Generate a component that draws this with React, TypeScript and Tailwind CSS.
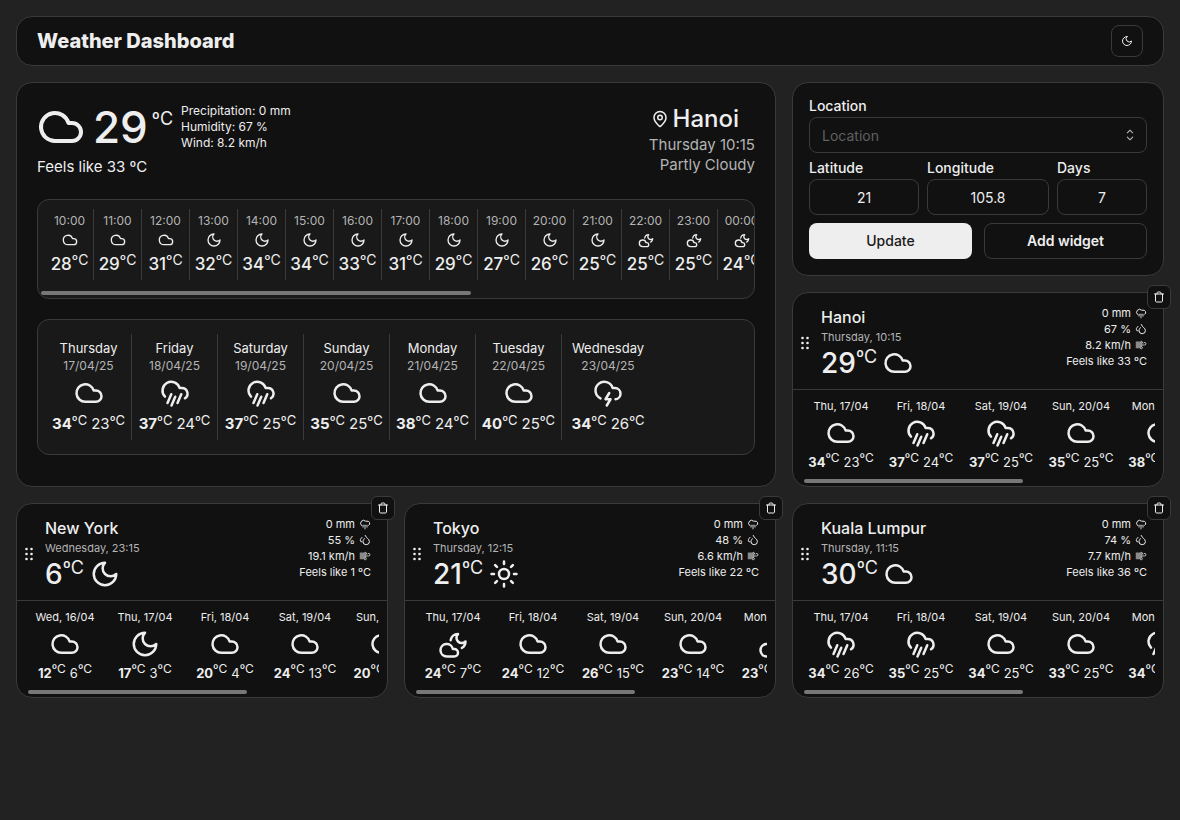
import React, { useState } from "react";
import { RxCaretSort } from "react-icons/rx";

type IconName = "cloud" | "moon" | "cloudMoon" | "rain" | "storm" | "sun" | "trash";

const paths: Record<IconName, React.ReactNode> = {
  cloud: <path d="M17.5 19H9a7 7 0 1 1 6.71-9h1.79a4.5 4.5 0 1 1 0 9Z" />,
  moon: <path d="M12 3a6 6 0 0 0 9 9 9 9 0 1 1-9-9Z" />,
  cloudMoon: (
    <>
      <path d="M13 16a3 3 0 1 1 0 6H7a5 5 0 1 1 4.9-6Z" />
      <path d="M10.1 9A6 6 0 0 1 16 4a4.24 4.24 0 0 0 6 6 6 6 0 0 1-3 5.197" />
    </>
  ),
  rain: (
    <>
      <path d="M4 14.899A7 7 0 1 1 15.71 8h1.79a4.5 4.5 0 0 1 2.5 8.242" />
      <path d="m9.2 22 3-7" />
      <path d="m9 13-3 7" />
      <path d="m17 13-3 7" />
    </>
  ),
  storm: (
    <>
      <path d="M6 16.326A7 7 0 1 1 15.71 8h1.79a4.5 4.5 0 0 1 .5 8.973" />
      <path d="m13 12-3 5h4l-3 5" />
    </>
  ),
  sun: (
    <>
      <circle cx="12" cy="12" r="4" />
      <path d="M12 2v2M12 20v2M4.93 4.93l1.41 1.41M17.66 17.66l1.41 1.41M2 12h2M20 12h2M6.34 17.66l-1.41 1.41M19.07 4.93l-1.41 1.41" />
    </>
  ),
  trash: (
    <>
      <path d="M3 6h18" />
      <path d="M19 6v14c0 1-1 2-2 2H7c-1 0-2-1-2-2V6" />
      <path d="M8 6V4c0-1 1-2 2-2h4c1 0 2 1 2 2v2" />
    </>
  ),
};

function Icon({ name, className }: { name: IconName; className: string }) {
  return (
    <svg
      viewBox="0 0 24 24"
      fill="none"
      stroke="currentColor"
      strokeWidth="2"
      strokeLinecap="round"
      strokeLinejoin="round"
      aria-hidden="true"
      className={`shrink-0 ${className}`}
    >
      {paths[name]}
    </svg>
  );
}

function MetricIcon({ name }: { name: "rain" | "drops" | "wind" }) {
  return (
    <svg viewBox="0 0 12 12" fill="none" stroke="currentColor" strokeLinecap="round" strokeLinejoin="round" aria-hidden="true" className="size-3 shrink-0">
      {name === "rain" && (
        <>
          <path d="M2.5 7.5A2.8 2.8 0 1 1 6.6 3.2h1.4a2.3 2.3 0 0 1 1.8 4.1" strokeWidth="1" />
          <path d="M4 7.5v1.5M6 7.5v3.2M8 7.5v1.5M4 7.5h4" strokeWidth="1.6" opacity="0.55" />
        </>
      )}
      {name === "drops" && (
        <>
          <path d="M3 3.4C2 4.5 1.3 5.3 1.3 6.2A1.7 1.7 0 0 0 3 8" strokeWidth="1" />
          <path d="M6.2 1.5C6.8 3.9 10.4 4.8 10.4 7.5a3.2 3.2 0 0 1-6.4 0C4 6.5 4.7 5.7 5.3 4.7" strokeWidth="1" />
        </>
      )}
      {name === "wind" && (
        <>
          <path d="M1.5 3.3h4.5M1.5 5h5M1.5 6.700h5M1.5 8.3h4" strokeWidth="1.8" opacity="0.55" />
          <path d="M6 2.5a1 1 0 1 1 .8 1.8M7 6h2.6a1.3 1.3 0 1 0-1.1-1.9M6 7.5a1.2 1.2 0 1 1-.6 2" strokeWidth="1" opacity="0.75" />
        </>
      )}
    </svg>
  );
}

const hours: [string, IconName, number][] = [
  ["10:00", "cloud", 28],
  ["11:00", "cloud", 29],
  ["12:00", "cloud", 31],
  ["13:00", "moon", 32],
  ["14:00", "moon", 34],
  ["15:00", "moon", 34],
  ["16:00", "moon", 33],
  ["17:00", "moon", 31],
  ["18:00", "moon", 29],
  ["19:00", "moon", 27],
  ["20:00", "moon", 26],
  ["21:00", "moon", 25],
  ["22:00", "cloudMoon", 25],
  ["23:00", "cloudMoon", 25],
  ["00:00", "cloudMoon", 24],
];

const week: [string, string, IconName, number, number][] = [
  ["Thursday", "17/04/25", "cloud", 34, 23],
  ["Friday", "18/04/25", "rain", 37, 24],
  ["Saturday", "19/04/25", "rain", 37, 25],
  ["Sunday", "20/04/25", "cloud", 35, 25],
  ["Monday", "21/04/25", "cloud", 38, 24],
  ["Tuesday", "22/04/25", "cloud", 40, 25],
  ["Wednesday", "23/04/25", "storm", 34, 26],
];

type Widget = {
  city: string;
  time: string;
  temp: number;
  icon: IconName;
  humidity: number;
  wind: number;
  feels: number;
  days: [string, IconName, number, number][];
};

const widgets: Widget[] = [
  {
    city: "Hanoi", time: "Thursday, 10:15", temp: 29, icon: "cloud", humidity: 67, wind: 8.2, feels: 33,
    days: [
      ["Thu, 17/04", "cloud", 34, 23],
      ["Fri, 18/04", "rain", 37, 24],
      ["Sat, 19/04", "rain", 37, 25],
      ["Sun, 20/04", "cloud", 35, 25],
      ["Mon, 21/04", "cloud", 38, 24],
    ],
  },
  {
    city: "New York", time: "Wednesday, 23:15", temp: 6, icon: "moon", humidity: 55, wind: 19.1, feels: 1,
    days: [
      ["Wed, 16/04", "cloud", 12, 6],
      ["Thu, 17/04", "moon", 17, 3],
      ["Fri, 18/04", "cloud", 20, 4],
      ["Sat, 19/04", "cloud", 24, 13],
      ["Sun, 20/04", "cloud", 20, 10],
    ],
  },
  {
    city: "Tokyo", time: "Thursday, 12:15", temp: 21, icon: "sun", humidity: 48, wind: 6.6, feels: 22,
    days: [
      ["Thu, 17/04", "cloudMoon", 24, 7],
      ["Fri, 18/04", "cloud", 24, 12],
      ["Sat, 19/04", "cloud", 26, 15],
      ["Sun, 20/04", "cloud", 23, 14],
      ["Mon, 21/04", "cloudMoon", 23, 14],
    ],
  },
  {
    city: "Kuala Lumpur", time: "Thursday, 11:15", temp: 30, icon: "cloud", humidity: 74, wind: 7.7, feels: 36,
    days: [
      ["Thu, 17/04", "rain", 34, 26],
      ["Fri, 18/04", "rain", 35, 25],
      ["Sat, 19/04", "cloud", 34, 25],
      ["Sun, 20/04", "cloud", 33, 25],
      ["Mon, 21/04", "rain", 34, 25],
    ],
  },
];

function HighLow({ high, low, className, unit }: { high: number; low: number; className: string; unit: string }) {
  return (
    <p className={`flex items-start whitespace-nowrap ${className}`}>
      <strong className="font-bold">{high}</strong>
      <span className={unit}>ºC</span>
      <span className="ml-1">{low}</span>
      <span className={unit}>ºC</span>
    </p>
  );
}

function Dots() {
  return (
    <svg viewBox="0 0 8 14" fill="currentColor" aria-hidden="true" className="h-3.5 w-2">
      {[2, 7, 12].map((y) => (
        <React.Fragment key={y}>
          <circle cx="1.5" cy={y} r="1.3" />
          <circle cx="6.5" cy={y} r="1.3" />
        </React.Fragment>
      ))}
    </svg>
  );
}

function WidgetCard({ w }: { w: Widget }) {
  return (
    <article className="relative flex flex-col rounded-2xl border border-[#3a3a3a] bg-[#111]">
      <button
        type="button"
        aria-label={`Delete ${w.city}`}
        className="absolute -top-2 -right-2 flex size-6 items-center justify-center rounded-md border border-[#3a3a3a] bg-[#111]"
      >
        <Icon name="trash" className="size-3" />
      </button>
      <div className="flex h-[97px] items-center border-b border-[#3a3a3a] pt-1 pr-4 pl-2">
        <button type="button" aria-label={`Move ${w.city}`} className="mr-3 flex">
          <Dots />
        </button>
        <div className="flex-1">
          <h2 className="text-base leading-5 font-medium">{w.city}</h2>
          <p className="text-[11px] leading-5 text-[#b4b4b4]">{w.time}</p>
          <div className="flex items-center gap-1.5">
            <p className="flex items-start text-[28px] leading-8 font-medium">
              {w.temp}
              <span className="text-lg leading-5 font-normal">ºC</span>
            </p>
            <Icon name={w.icon} className="size-[30px]" />
          </div>
        </div>
        <ul className="mb-3 text-right text-[11px] leading-4">
          <li className="flex items-center justify-end gap-1">0 mm <MetricIcon name="rain" /></li>
          <li className="flex items-center justify-end gap-1">{w.humidity} % <MetricIcon name="drops" /></li>
          <li className="flex items-center justify-end gap-1">{w.wind} km/h <MetricIcon name="wind" /></li>
          <li>Feels like {w.feels} ºC</li>
        </ul>
      </div>
      <div className="px-2 pt-2">
        <div className="overflow-x-auto [scrollbar-width:none]">
          <ul className="flex w-max">
            {w.days.map(([day, icon, high, low]) => (
              <li key={day} className="flex w-20 flex-col items-center">
                <p className="text-[11px] leading-4 whitespace-nowrap">{day}</p>
                <Icon name={icon} className="my-1 size-[30px]" />
                <HighLow high={high} low={low} className="text-[13px] leading-5" unit="text-xs leading-3" />
              </li>
            ))}
          </ul>
        </div>
        <div className="mx-[3px] mt-[7px] mb-[3px] h-1 w-[62%] rounded-full bg-[#777]" />
      </div>
    </article>
  );
}

const field =
  "h-9 w-full min-w-0 rounded-lg border border-[#3a3a3a] bg-[#111] text-sm outline-none placeholder:text-[#606060]";

const labelText = "mb-1 block text-sm leading-[14px] font-medium";

function Field({ id, label, value }: { id: string; label: string; value: string }) {
  const [text, setText] = useState(value);
  return (
    <div className="min-w-0">
      <label htmlFor={id} className={labelText}>{label}</label>
      <input id={id} value={text} onChange={(e) => setText(e.target.value)} className={`${field} px-3 text-center`} />
    </div>
  );
}

export default function App() {
  return (
    <div className="min-h-screen bg-[#222] p-4 font-['Inter','Liberation_Sans',sans-serif] text-[#eee]">
      <header className="flex items-center justify-between rounded-2xl border border-[#3a3a3a] bg-[#111] px-5 py-2">
        <h1 className="text-xl leading-7 font-extrabold">Weather Dashboard</h1>
        <button type="button" aria-label="Toggle theme" className="flex size-8 items-center justify-center rounded-lg border border-[#3a3a3a]">
          <Icon name="moon" className="size-3" />
        </button>
      </header>

      <main className="mt-4 grid grid-cols-3 gap-4">
        <section className="col-span-2 row-span-2 flex min-w-0 flex-col rounded-2xl border border-[#3a3a3a] bg-[#111] p-5">
          <div className="flex items-start justify-between">
            <div>
              <div className="flex items-center">
                <Icon name="cloud" className="size-12" />
                <p className="ml-2 flex items-start text-[44px] leading-12 font-medium">
                  29
                  <span className="ml-1 text-lg leading-8 font-normal">ºC</span>
                </p>
                <ul className="ml-2 text-xs leading-4">
                  <li>Precipitation: 0 mm</li>
                  <li>Humidity: 67 %</li>
                  <li>Wind: 8.2 km/h</li>
                </ul>
              </div>
              <p className="mt-1 text-[15px] leading-6">Feels like 33 ºC</p>
            </div>
            <div className="text-right text-[15px] leading-5 text-[#b4b4b4]">
              <h2 className="flex items-center justify-end gap-1 pr-4 text-2xl leading-8 font-medium text-[#eee]">
                <svg viewBox="0 0 24 24" fill="none" stroke="currentColor" strokeWidth="2" strokeLinecap="round" strokeLinejoin="round" aria-hidden="true" className="size-[18px]">
                  <path d="M20 10c0 4.993-5.539 10.193-7.399 11.799a1 1 0 0 1-1.202 0C9.539 20.193 4 14.993 4 10a8 8 0 0 1 16 0" />
                  <circle cx="12" cy="10" r="3" />
                </svg>
                Hanoi
              </h2>
              <p>Thursday 10:15</p>
              <p>Partly Cloudy</p>
            </div>
          </div>

          <div className="mt-5 rounded-xl border border-[#3a3a3a] bg-[#191919] pt-[9px] pb-[3px]">
            <div className="overflow-x-auto [scrollbar-width:none]">
              <ul className="flex w-max pl-2">
                {hours.map(([time, icon, temp]) => (
                  <li key={time} className="flex w-12 flex-col items-center border-r border-[#3a3a3a] py-1">
                    <p className="text-xs leading-4 text-[#b4b4b4]">{time}</p>
                    <Icon name={icon} className="mt-[3px] mb-1 size-4" />
                    <p className="flex items-start text-[17px] leading-6 font-medium">
                      {temp}
                      <span className="text-sm leading-4 font-normal">ºC</span>
                    </p>
                  </li>
                ))}
              </ul>
            </div>
            <div className="mx-[3px] mt-[11px] h-1 w-3/5 rounded-full bg-[#777]" />
          </div>

          <div className="mt-5 overflow-hidden rounded-xl border border-[#3a3a3a] bg-[#191919] px-2 py-3.5">
            <ul className="flex">
              {week.map(([day, date, icon, high, low]) => (
                <li key={day} className="flex w-[86px] flex-col items-center border-r border-[#3a3a3a] py-1 last:w-[92px] last:border-r-0">
                  <p className="text-[13px] leading-5">{day}</p>
                  <p className="text-xs leading-4 text-[#b4b4b4]">{date}</p>
                  <Icon name={icon} className="my-1 size-[30px]" />
                  <HighLow high={high} low={low} className="text-[15px] leading-6" unit="text-[13px] leading-4" />
                </li>
              ))}
            </ul>
          </div>
        </section>

        <form onSubmit={(e) => e.preventDefault()} className="flex min-w-0 flex-col gap-2 rounded-2xl border border-[#3a3a3a] bg-[#111] p-4">
          <div>
            <label htmlFor="location" className={labelText}>Location</label>
            <div className="relative">
              <input id="location" placeholder="Location" className={`${field} pr-9 pl-3`} />
              <RxCaretSort aria-hidden="true" className="absolute inset-y-0 right-2 my-auto size-[18px] text-[#b4b4b4]" />
            </div>
          </div>
          <div className="grid grid-cols-[110fr_122fr_90fr] gap-2">
            <Field id="latitude" label="Latitude" value="21" />
            <Field id="longitude" label="Longitude" value="105.8" />
            <Field id="days" label="Days" value="7" />
          </div>
          <div className="grid grid-cols-2 gap-3">
            <button type="submit" className="h-9 rounded-lg bg-[#eee] text-sm font-medium text-[#191919]">Update</button>
            <button type="button" className="h-9 rounded-lg border border-[#3a3a3a] text-sm font-semibold">Add widget</button>
          </div>
        </form>

        {widgets.map((w) => (
          <WidgetCard key={w.city} w={w} />
        ))}
      </main>
    </div>
  );
}
